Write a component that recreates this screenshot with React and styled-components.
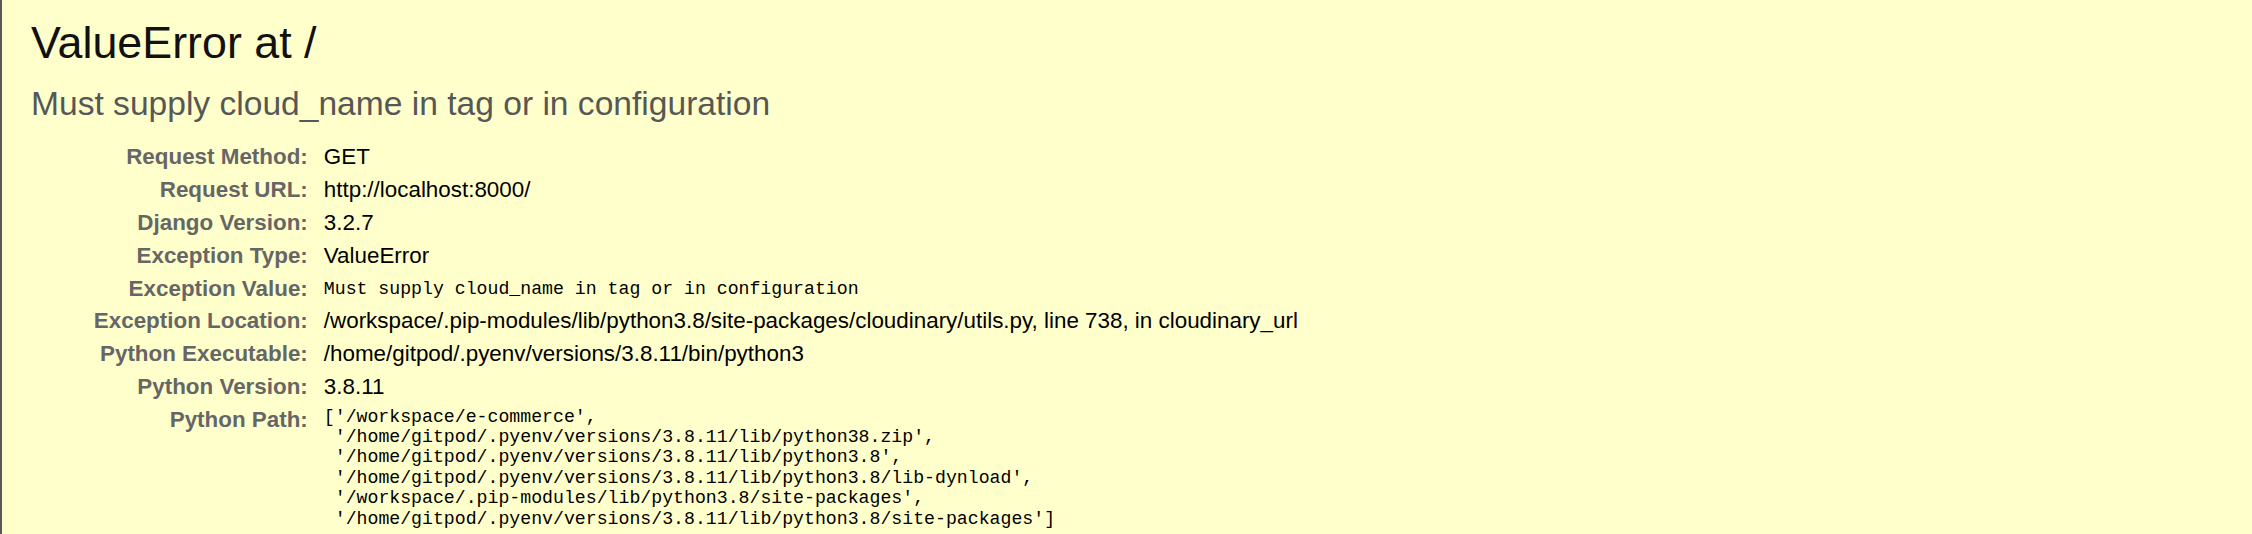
import React from "react";
import styled, { createGlobalStyle } from "styled-components";

const GlobalStyle = createGlobalStyle`
  html, body {
    margin: 0;
    padding: 0;
    height: 100%;
    overflow: hidden;
  }
  body {
    font-family: "Liberation Sans", Arial, sans-serif;
    font-size: 22.4px;
    background: #ffc;
    color: #000;
  }
`;

const Summary = styled.div`
  min-height: 100vh;
  box-sizing: border-box;
  background: #ffc;
  border-left: 2px solid #595959;
  padding: 17px 34px 17px 29px;
`;

const Title = styled.h1`
  margin: 0;
  font-size: 2em;
  font-weight: normal;
  line-height: 1.149;
  color: #111;
`;

const ExceptionValue = styled.pre`
  margin: 17px 0;
  font-family: "Liberation Sans", Arial, sans-serif;
  font-size: 1.5em;
  color: #575757;
  white-space: pre-wrap;
  line-height: 1.149;
`;

const Meta = styled.table`
  border: none;
  border-collapse: collapse;
  background: transparent;
  font-size: 1em;
  margin-left: 3px;
`;

const Label = styled.th`
  width: 12em;
  vertical-align: top;
  text-align: right;
  color: #666;
  font-weight: bold;
  padding: 3.4px 11px 3.4px 5px;
  line-height: 1.16;
`;

const Value = styled.td`
  vertical-align: top;
  padding: 3.4px 5px;
  line-height: 1.16;
`;

const Code = styled.pre`
  margin: 0;
  font-family: "Liberation Mono", "Courier New", monospace;
  font-size: 18.2px;
  line-height: ${(p) => (p.$block ? "20.4px" : "26px")};
  white-space: pre-wrap;
  word-break: break-word;
`;

const rows = [
  ["Request Method:", "GET"],
  ["Request URL:", "http://localhost:8000/"],
  ["Django Version:", "3.2.7"],
  ["Exception Type:", "ValueError"],
  ["Exception Value:", "Must supply cloud_name in tag or in configuration", "code"],
  [
    "Exception Location:",
    "/workspace/.pip-modules/lib/python3.8/site-packages/cloudinary/utils.py, line 738, in cloudinary_url",
  ],
  ["Python Executable:", "/home/gitpod/.pyenv/versions/3.8.11/bin/python3"],
  ["Python Version:", "3.8.11"],
  [
    "Python Path:",
    `['/workspace/e-commerce',
 '/home/gitpod/.pyenv/versions/3.8.11/lib/python38.zip',
 '/home/gitpod/.pyenv/versions/3.8.11/lib/python3.8',
 '/home/gitpod/.pyenv/versions/3.8.11/lib/python3.8/lib-dynload',
 '/workspace/.pip-modules/lib/python3.8/site-packages',
 '/home/gitpod/.pyenv/versions/3.8.11/lib/python3.8/site-packages']`,
    "block",
  ],
];

const App = () => (
  <>
    <GlobalStyle />
    <Summary>
      <Title>ValueError at /</Title>
      <ExceptionValue>Must supply cloud_name in tag or in configuration</ExceptionValue>
      <Meta>
        <tbody>
          {rows.map(([label, value, kind]) => (
            <tr key={label}>
              <Label>{label}</Label>
              <Value>
                {kind ? <Code $block={kind === "block"}>{value}</Code> : value}
              </Value>
            </tr>
          ))}
        </tbody>
      </Meta>
    </Summary>
  </>
);

export default App;
